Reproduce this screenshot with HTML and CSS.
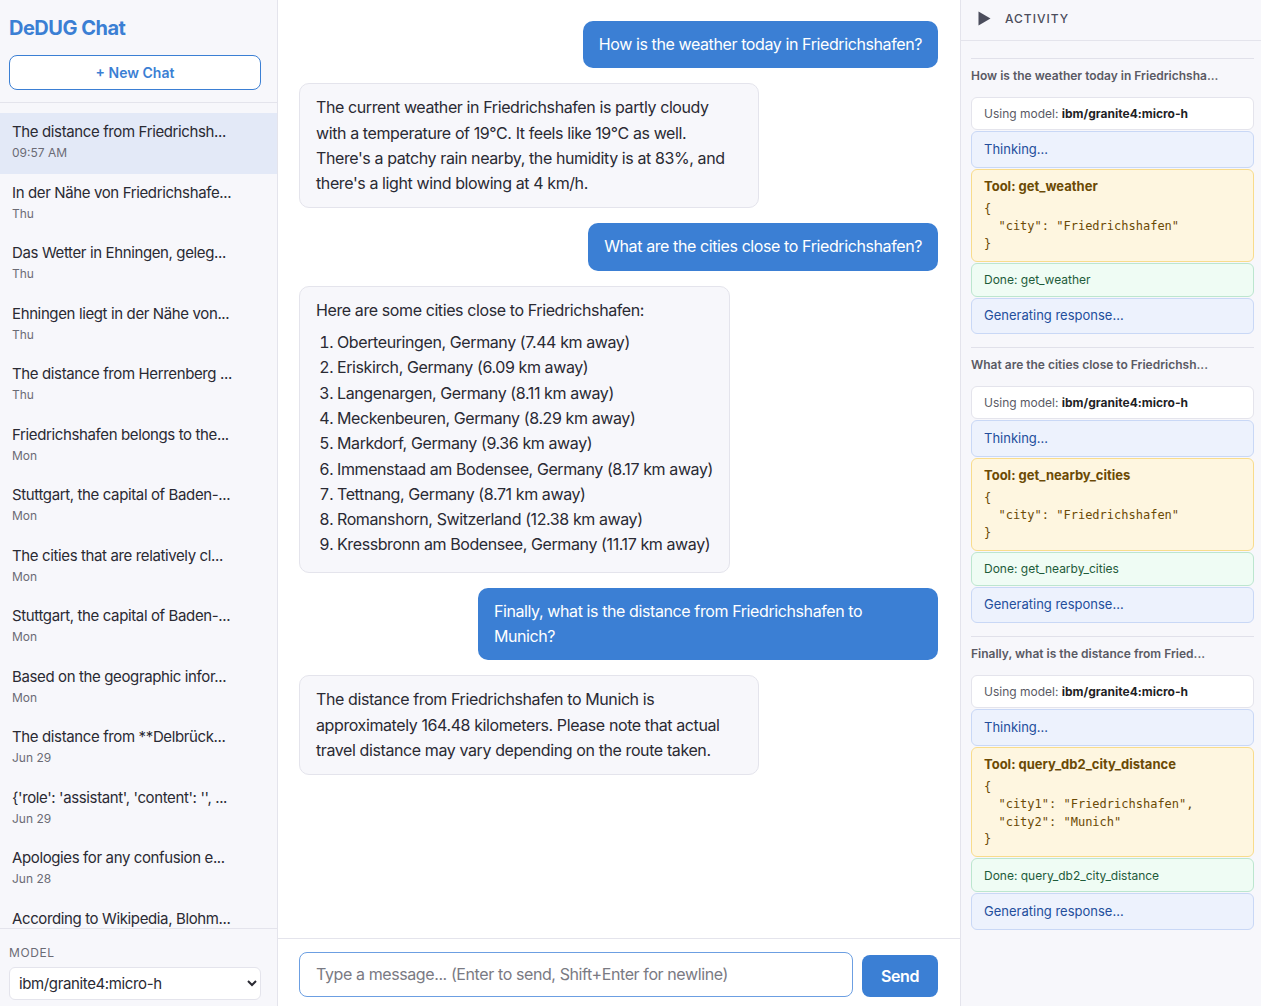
FILE: index.html
```html
<!DOCTYPE html>
<html lang="en">
<head>
  <meta charset="UTF-8">
  <meta name="viewport" content="width=device-width, initial-scale=1.0">
  <title>DeDUG Chat</title>
  <link rel="stylesheet" href="styles.css">
</head>
<body>
  <div class="app">

    <!-- Sidebar with chat history -->
    <aside class="sidebar">
      <div class="sidebar-head">
        <h1 class="brand">DeDUG Chat</h1>
        <button class="new-chat">+ New Chat</button>
      </div>

      <ul class="chat-list">
        <li class="chat-item active">
          <div class="chat-title">The distance from Friedrichsh...</div>
          <div class="chat-date">09:57 AM</div>
        </li>
        <li class="chat-item">
          <div class="chat-title">In der Nähe von Friedrichshafe...</div>
          <div class="chat-date">Thu</div>
        </li>
        <li class="chat-item">
          <div class="chat-title">Das Wetter in Ehningen, geleg...</div>
          <div class="chat-date">Thu</div>
        </li>
        <li class="chat-item">
          <div class="chat-title">Ehningen liegt in der Nähe von...</div>
          <div class="chat-date">Thu</div>
        </li>
        <li class="chat-item">
          <div class="chat-title">The distance from Herrenberg ...</div>
          <div class="chat-date">Thu</div>
        </li>
        <li class="chat-item">
          <div class="chat-title">Friedrichshafen belongs to the...</div>
          <div class="chat-date">Mon</div>
        </li>
        <li class="chat-item">
          <div class="chat-title">Stuttgart, the capital of Baden-...</div>
          <div class="chat-date">Mon</div>
        </li>
        <li class="chat-item">
          <div class="chat-title">The cities that are relatively cl...</div>
          <div class="chat-date">Mon</div>
        </li>
        <li class="chat-item">
          <div class="chat-title">Stuttgart, the capital of Baden-...</div>
          <div class="chat-date">Mon</div>
        </li>
        <li class="chat-item">
          <div class="chat-title">Based on the geographic infor...</div>
          <div class="chat-date">Mon</div>
        </li>
        <li class="chat-item">
          <div class="chat-title">The distance from **Delbrück...</div>
          <div class="chat-date">Jun 29</div>
        </li>
        <li class="chat-item">
          <div class="chat-title">{'role': 'assistant', 'content': '', ...</div>
          <div class="chat-date">Jun 29</div>
        </li>
        <li class="chat-item">
          <div class="chat-title">Apologies for any confusion e...</div>
          <div class="chat-date">Jun 28</div>
        </li>
        <li class="chat-item">
          <div class="chat-title">According to Wikipedia, Blohm...</div>
          <div class="chat-date">Jun 28</div>
        </li>
      </ul>

      <div class="model-box">
        <label class="model-label" for="model">Model</label>
        <select id="model" class="model-select">
          <option>ibm/granite4:micro-h</option>
        </select>
      </div>
    </aside>

    <!-- Conversation -->
    <main class="chat">
      <div class="messages">
        <div class="msg user">How is the weather today in Friedrichshafen?</div>
        <div class="msg bot">The current weather in Friedrichshafen is partly cloudy with a temperature of 19°C. It feels like 19°C as well. There's a patchy rain nearby, the humidity is at 83%, and there's a light wind blowing at 4 km/h.</div>
        <div class="msg user">What are the cities close to Friedrichshafen?</div>
        <div class="msg bot">
          <p>Here are some cities close to Friedrichshafen:</p>
          <ol>
            <li>Oberteuringen, Germany (7.44 km away)</li>
            <li>Eriskirch, Germany (6.09 km away)</li>
            <li>Langenargen, Germany (8.11 km away)</li>
            <li>Meckenbeuren, Germany (8.29 km away)</li>
            <li>Markdorf, Germany (9.36 km away)</li>
            <li>Immenstaad am Bodensee, Germany (8.17 km away)</li>
            <li>Tettnang, Germany (8.71 km away)</li>
            <li>Romanshorn, Switzerland (12.38 km away)</li>
            <li>Kressbronn am Bodensee, Germany (11.17 km away)</li>
          </ol>
        </div>
        <div class="msg user">Finally, what is the distance from Friedrichshafen to Munich?</div>
        <div class="msg bot">The distance from Friedrichshafen to Munich is approximately 164.48 kilometers. Please note that actual travel distance may vary depending on the route taken.</div>
      </div>

      <div class="composer">
        <textarea class="composer-input" rows="1" placeholder="Type a message... (Enter to send, Shift+Enter for newline)"></textarea>
        <button class="send">Send</button>
      </div>
    </main>

    <!-- Activity log -->
    <aside class="activity">
      <div class="activity-head">
        <svg class="toggle" width="13" height="15" viewBox="0 0 13 15"><path d="M0.5 0.5 L12.5 7.5 L0.5 14.5 Z" fill="#4b4d5c"/></svg>
        <span>Activity</span>
      </div>

      <div class="activity-body">
        <div class="group">
          <div class="group-title">How is the weather today in Friedrichsha...</div>
          <div class="step model">Using model: <b>ibm/granite4:micro-h</b></div>
          <div class="step thinking">Thinking...</div>
          <div class="step tool">
            <div class="tool-name">Tool: get_weather</div>
<pre>{
  "city": "Friedrichshafen"
}</pre>
          </div>
          <div class="step done">Done: get_weather</div>
          <div class="step thinking">Generating response...</div>
        </div>

        <div class="group">
          <div class="group-title">What are the cities close to Friedrichsh...</div>
          <div class="step model">Using model: <b>ibm/granite4:micro-h</b></div>
          <div class="step thinking">Thinking...</div>
          <div class="step tool">
            <div class="tool-name">Tool: get_nearby_cities</div>
<pre>{
  "city": "Friedrichshafen"
}</pre>
          </div>
          <div class="step done">Done: get_nearby_cities</div>
          <div class="step thinking">Generating response...</div>
        </div>

        <div class="group">
          <div class="group-title">Finally, what is the distance from Fried...</div>
          <div class="step model">Using model: <b>ibm/granite4:micro-h</b></div>
          <div class="step thinking">Thinking...</div>
          <div class="step tool">
            <div class="tool-name">Tool: query_db2_city_distance</div>
<pre>{
  "city1": "Friedrichshafen",
  "city2": "Munich"
}</pre>
          </div>
          <div class="step done">Done: query_db2_city_distance</div>
          <div class="step thinking">Generating response...</div>
        </div>
      </div>
    </aside>

  </div>
</body>
</html>
```

FILE: styles.css
```css
* {
  box-sizing: border-box;
}
html, body {
  margin: 0;
  height: 100%;
}
body {
  font-family: Inter, "Noto Sans", sans-serif;
  color: #24242b;
  background: #fff;
}
.app {
  display: flex;
  height: 100vh;
  overflow: hidden;
}

/* sidebar */
.sidebar {
  width: 278px;
  flex-shrink: 0;
  display: flex;
  flex-direction: column;
  background: #f7f7fb;
  border-right: 1px solid #e4e4ec;
}
.sidebar-head {
  padding: 16px 16px 12px 9px;
  border-bottom: 1px solid #e4e4ec;
}
.brand {
  margin: 0 0 15px;
  font-size: 20px;
  line-height: 24px;
  font-weight: 700;
  letter-spacing: -0.025em;
  color: #3b7fd4;
}
.new-chat {
  width: 100%;
  height: 35px;
  background: #fff;
  border: 1px solid #3b7fd4;
  border-radius: 8px;
  color: #3b7fd4;
  font-family: inherit;
  font-size: 14px;
  font-weight: 600;
  cursor: pointer;
}
.chat-list {
  list-style: none;
  margin: 0;
  padding: 10px 0 0;
  flex: 1;
  overflow: hidden;
}
.chat-item {
  padding: 9px 12px 12.5px;
  cursor: pointer;
}
.chat-item.active {
  background: #e3e9f7;
}
.chat-title {
  font-size: 15px;
  line-height: 20px;
  letter-spacing: -0.025em;
  color: #2a2a33;
  white-space: nowrap;
}
.chat-date {
  margin-top: 3px;
  font-size: 12px;
  line-height: 16px;
  color: #6b6b75;
}
.model-box {
  padding: 16px 16px 6px 9px;
  border-top: 1px solid #e4e4ec;
}
.model-label {
  display: block;
  font-size: 12px;
  line-height: 16px;
  letter-spacing: 0.6px;
  text-transform: uppercase;
  color: #6b6b75;
  margin-bottom: 6px;
}
.model-select {
  width: 100%;
  height: 33px;
  padding: 0 5px;
  font-family: inherit;
  font-size: 15px;
  letter-spacing: -0.025em;
  color: #2a2a33;
  background: #fff;
  border: 1px solid #e4e4ec;
  border-radius: 6px;
}

/* conversation */
.chat {
  flex: 1;
  display: flex;
  flex-direction: column;
  min-width: 0;
}
.messages {
  flex: 1;
  overflow: hidden;
  padding: 21px 22px 21px 21px;
  display: flex;
  flex-direction: column;
  gap: 15px;
}
.msg {
  max-width: 72%;
  font-size: 16px;
  line-height: 25.3px;
  letter-spacing: -0.025em;
  padding: 11px 16px;
  border-radius: 10px;
}
.msg.user {
  align-self: flex-end;
  background: #3b7fd4;
  color: #fff;
}
.msg.bot {
  align-self: flex-start;
  background: #f7f7fb;
  border: 1px solid #e4e4ec;
  color: #2a2a33;
}
.msg p {
  margin: 0;
}
.msg ol {
  margin: 7px 0 3px;
  padding-left: 21px;
}
.composer {
  display: flex;
  align-items: flex-end;
  gap: 9px;
  padding: 13px 22px 9px 21px;
  border-top: 1px solid #e4e4ec;
}
.composer-input {
  flex: 1;
  height: 45px;
  resize: none;
  padding: 10px 16px;
  font-family: inherit;
  font-size: 16px;
  line-height: 23px;
  letter-spacing: -0.025em;
  color: #2a2a33;
  border: 1px solid #6c9fe2;
  border-radius: 8px;
  outline: none;
}
.composer-input::placeholder {
  color: #7a7a83;
}
.send {
  width: 76px;
  height: 42px;
  background: #3b7fd4;
  color: #fff;
  border: none;
  border-radius: 8px;
  font-family: inherit;
  font-size: 16px;
  font-weight: 600;
  letter-spacing: -0.025em;
  cursor: pointer;
}

/* activity panel */
.activity {
  width: 301px;
  flex-shrink: 0;
  background: #f7f7fb;
  border-left: 1px solid #e4e4ec;
  display: flex;
  flex-direction: column;
}
.activity-head {
  height: 41px;
  display: flex;
  align-items: center;
  gap: 14px;
  padding: 0 17px 4px;
  border-bottom: 1px solid #e4e4ec;
  font-size: 12px;
  font-weight: 500;
  letter-spacing: 1px;
  text-transform: uppercase;
  color: #4b4d5c;
}
.activity-body {
  flex: 1;
  overflow: hidden;
  padding: 17px 7px 0 10px;
}
.group {
  border-top: 1px solid #e1e1ea;
  padding-top: 9px;
  margin-bottom: 13px;
}
.group-title {
  font-size: 12px;
  line-height: 16px;
  font-weight: 600;
  color: #5a5a64;
  margin-bottom: 13px;
  white-space: nowrap;
}
.step {
  font-size: 13px;
  line-height: 19.5px;
  padding: 7.5px 12px;
  border: 1px solid #e4e4ec;
  border-radius: 6px;
  margin-bottom: 1px;
}
.step.model {
  font-size: 12px;
  line-height: 16px;
  background: #fff;
  color: #5a5a64;
}
.step.model b {
  color: #1f1f26;
}
.step.thinking {
  background: #edf2fd;
  border-color: #c9d8f6;
  color: #234e9c;
}
.step.tool {
  background: #fef6e0;
  border-color: #f8dc8c;
  color: #6b4a05;
}
.tool-name {
  font-weight: 700;
}
.step pre {
  margin: 4px 0 0;
  font-family: "DejaVu Sans Mono", monospace;
  font-size: 12px;
  line-height: 17.5px;
}
.step.done {
  font-size: 12px;
  line-height: 17px;
  background: #effcf4;
  border-color: #bce6cf;
  color: #1e5b3a;
}
```
